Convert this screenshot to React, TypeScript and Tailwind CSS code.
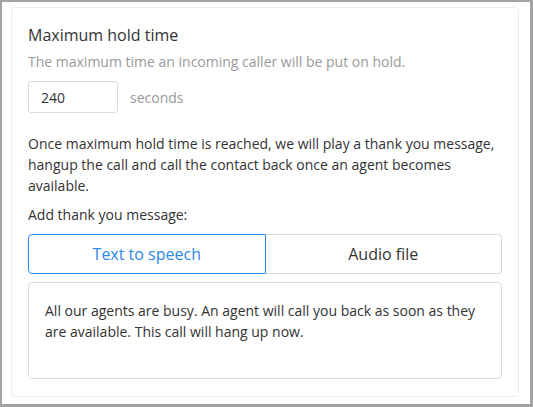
import React from "react";

export default function App() {
  return (
    <div
      className="w-[533px] h-[407px] bg-white border-l-2 border-t-2 border-r-[3px] border-b-[3px] border-[#a3a3a3] overflow-hidden"
      style={{ fontFamily: '"Open Sans", "Liberation Sans", sans-serif' }}
    >
      <div className="ml-[9px] mt-[5px] w-[508px] h-[390px] border border-[#ececec] rounded-[4px] px-4 pt-4 text-[#333333]">
        <div className="text-[16px] leading-[22px] text-[#333333]">Maximum hold time</div>
        <div className="mt-[6px] text-[14px] leading-[20px] text-[#9a9a9a]">
          The maximum time an incoming caller will be put on hold.
        </div>
        <div className="mt-[9px] flex items-center">
          <div className="w-[90px] h-[32px] border border-[#dcdcdc] rounded-[3px] flex items-center pl-3 text-[14px] text-[#333333]">
            240
          </div>
          <div className="ml-3 text-[14px] text-[#9a9a9a]">seconds</div>
        </div>
        <p className="mt-[20px] text-[14px] leading-[21px] text-[#333333]">
          Once maximum hold time is reached, we will play a thank you message, hangup the call and call the contact back once an agent becomes available.
        </p>
        <div className="mt-[8px] text-[14px] leading-[21px] text-[#333333]">Add thank you message:</div>
        <div className="mt-[9px] flex h-[40px]">
          <div className="flex-1 flex items-center justify-center border border-[#2b8ae6] rounded-l-[4px] text-[16px] text-[#2b8ae6]">
            Text to speech
          </div>
          <div className="flex-1 flex items-center justify-center border border-l-0 border-[#dadada] rounded-r-[4px] text-[16px] text-[#333333]">
            Audio file
          </div>
        </div>
        <div className="mt-[8px] h-[97px] border border-[#dcdcdc] rounded-[4px] px-4 pt-[17px] text-[14px] leading-[21px] text-[#333333]">
          All our agents are busy. An agent will call you back as soon as they are available. This call will hang up now.
        </div>
      </div>
    </div>
  );
}
